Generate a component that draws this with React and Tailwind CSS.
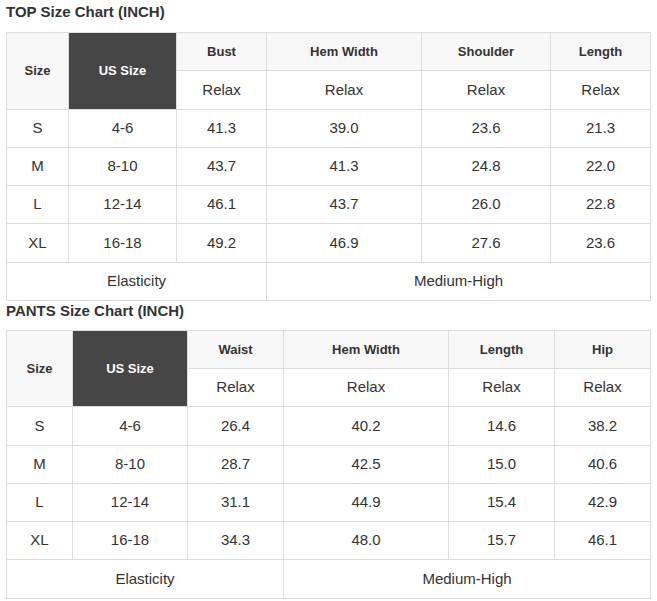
import React from 'react';

const top = {
  title: 'TOP Size Chart (INCH)',
  cols: [62, 108, 90, 155, 129, 100],
  heads: ['Bust', 'Hem Width', 'Shoulder', 'Length'],
  rows: [
    ['S', '4-6', '41.3', '39.0', '23.6', '21.3'],
    ['M', '8-10', '43.7', '41.3', '24.8', '22.0'],
    ['L', '12-14', '46.1', '43.7', '26.0', '22.8'],
    ['XL', '16-18', '49.2', '46.9', '27.6', '23.6'],
  ],
};

const pants = {
  title: 'PANTS Size Chart (INCH)',
  cols: [66, 115, 96, 165, 106, 96],
  heads: ['Waist', 'Hem Width', 'Length', 'Hip'],
  rows: [
    ['S', '4-6', '26.4', '40.2', '14.6', '38.2'],
    ['M', '8-10', '28.7', '42.5', '15.0', '40.6'],
    ['L', '12-14', '31.1', '44.9', '15.4', '42.9'],
    ['XL', '16-18', '34.3', '48.0', '15.7', '46.1'],
  ],
};

const cell = 'border border-[#dddddd] h-[38.25px] p-0 text-center align-middle';

function SizeChart({ chart, head }) {
  return (
    <div>
      <h2 className={`px-[6px] text-[15px] font-bold text-[#333333] ${head}`}>{chart.title}</h2>
      <div className="px-[6px]">
        <table className="w-[644px] table-fixed border-collapse">
          <colgroup>
            {chart.cols.map((w, i) => (
              <col key={i} style={{ width: w }} />
            ))}
          </colgroup>
          <tbody>
            <tr>
              <td rowSpan={2} className={`${cell} bg-[#f8f8f8] text-[13px] font-bold`}>Size</td>
              <td rowSpan={2} className={`${cell} bg-[#464646] text-white text-[13px] font-bold`}>US Size</td>
              {chart.heads.map((h) => (
                <td key={h} className={`${cell} bg-[#f8f8f8] text-[13px] font-bold`}>{h}</td>
              ))}
            </tr>
            <tr>
              {chart.heads.map((h) => (
                <td key={h} className={`${cell} text-[15px]`}>Relax</td>
              ))}
            </tr>
            {chart.rows.map((r) => (
              <tr key={r[0]}>
                {r.map((v, i) => (
                  <td key={i} className={`${cell} text-[15px]`}>{v}</td>
                ))}
              </tr>
            ))}
            <tr>
              <td colSpan={3} className={`${cell} text-[15px]`}>Elasticity</td>
              <td colSpan={3} className={`${cell} text-[15px]`}>Medium-High</td>
            </tr>
          </tbody>
        </table>
      </div>
    </div>
  );
}

export default function App() {
  return (
    <div className="w-[657px] h-[601px] bg-white text-[#333333] font-['Liberation_Sans',Arial,sans-serif]">
      <SizeChart chart={top} head="pt-[1px] leading-[22px] mb-[9px]" />
      <SizeChart chart={pants} head="leading-[19px] mb-[10px]" />
    </div>
  );
}
